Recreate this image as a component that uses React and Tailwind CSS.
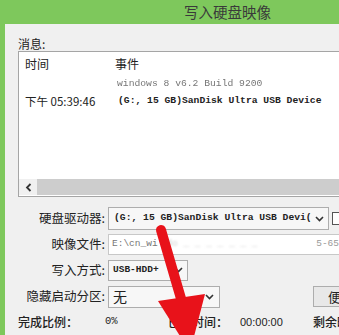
import React from 'react';

const cjk = { fontFamily: '"Noto Sans CJK SC", "Noto Sans", sans-serif' };
const mono = { fontFamily: '"Liberation Mono", "DejaVu Sans Mono", monospace' };

function Chevron() {
  return (
    <svg width="9" height="6" viewBox="0 0 9 6" className="shrink-0">
      <path d="M1 1 L4.5 4.5 L8 1" fill="none" stroke="#333" strokeWidth="1.6" />
    </svg>
  );
}

function Label({ children }) {
  return (
    <div className="w-[90px] shrink-0 pr-[3px] text-right text-[12.5px] text-[#222]" style={cjk}>
      {children}
    </div>
  );
}

export default function App() {
  return (
    <div className="relative w-[339px] h-[335px] overflow-hidden bg-[#7ec85c]">
      {/* title bar */}
      <div className="h-[24px] flex items-center pl-[184px] text-[14.5px] text-[#3a3a3a]" style={cjk}>
        写入硬盘映像
      </div>

      {/* body */}
      <div className="ml-[5px] h-[311px] bg-[#f0f0f0] pl-[13px] pt-[12px]">
        <div className="text-[12px] leading-[15px] text-[#222]" style={cjk}>消息:</div>

        {/* message list */}
        <div className="h-[146px] border border-[#a5a5a5] border-r-0 bg-white flex flex-col">
          <div className="flex h-[24px] items-center pl-[6px] text-[12px] text-[#222]" style={cjk}>
            <span className="w-[90px] shrink-0">时间</span>
            <span>事件</span>
          </div>
          <div className="pl-[98px] h-[17px] flex items-center text-[9.7px] text-[#777] blur-[0.4px] whitespace-nowrap" style={mono}>
            windows 8 v6.2 Build 9200
          </div>
          <div className="flex h-[17px] items-center pl-[6px] whitespace-nowrap">
            <span className="w-[93px] shrink-0 text-[11.5px] text-[#222]" style={cjk}>下午 05:39:46</span>
            <span className="text-[9.7px] text-[#222] font-semibold" style={mono}>(G:, 15 GB)SanDisk Ultra USB Device</span>
          </div>
          <div className="flex-1" />
          <div className="h-[16px] mb-[1px] flex bg-[#cdcdcd]">
            <div className="w-[18px] bg-[#f0f0f0] flex items-center justify-center">
              <svg width="7" height="9" viewBox="0 0 7 9">
                <path d="M5.5 1 L2 4.5 L5.5 8" fill="none" stroke="#333" strokeWidth="1.8" />
              </svg>
            </div>
          </div>
        </div>

        {/* form */}
        <div className="mt-[10px] flex flex-col gap-[3px]">
          <div className="flex items-center h-[23px]">
            <Label>硬盘驱动器:</Label>
            <div className="w-[221px] shrink-0 h-[23px] border border-[#adadad] bg-[#f7f7f7] flex items-center pl-[5px] pr-[4px] gap-[2px]">
              <span className="flex-1 overflow-hidden whitespace-nowrap text-[9.7px] text-[#222] font-semibold" style={mono}>
                (G:, 15 GB)SanDisk Ultra USB Devi(
              </span>
              <Chevron />
            </div>
            <div className="ml-[3px] w-[12px] h-[13px] border border-[#555] bg-white shrink-0" />
          </div>

          <div className="flex items-center h-[22px]">
            <Label>映像文件:</Label>
            <div className="flex-1 h-[21px] border border-[#c8c8c8] border-r-0 bg-white flex items-center pl-[3px] whitespace-nowrap overflow-hidden">
              <span className="text-[9.5px] text-[#777]" style={mono}>E:\cn_wi</span>
              <span className="ml-[3px] text-[9.5px] text-[#ccc] blur-[1.2px]" style={mono}>ndo _ _ _ _ _ _ _</span>
              <span className="ml-auto text-[9.5px] text-[#999]" style={mono}>5-65</span>
            </div>
          </div>

          <div className="flex items-center h-[24px]">
            <Label>写入方式:</Label>
            <div className="w-[80px] shrink-0 h-[21px] border border-[#adadad] bg-[#f7f7f7] flex items-center pl-[4px] pr-[4px]">
              <span className="flex-1 text-[9.5px] text-[#222] font-semibold whitespace-nowrap" style={mono}>USB-HDD+</span>
              <Chevron />
            </div>
          </div>

          <div className="flex items-center h-[23px]">
            <Label>隐藏启动分区:</Label>
            <div className="w-[112px] shrink-0 h-[22px] border border-[#adadad] bg-[#f7f7f7] flex items-center pl-[4px] pr-[5px]">
              <span className="flex-1 text-[14px] text-[#222]" style={cjk}>无</span>
              <Chevron />
            </div>
            <div className="ml-[93px] w-[40px] shrink-0 h-[21px] border border-[#adadad] bg-[#e8e8e8] flex items-center pl-[14px] text-[13px] text-[#222] whitespace-nowrap overflow-hidden" style={cjk}>
              便捷
            </div>
          </div>
        </div>

        {/* progress line */}
        <div className="mt-[5px] flex items-center h-[18px] text-[12px] text-[#222] whitespace-nowrap" style={cjk}>
          <span className="w-[87px] shrink-0 font-medium">完成比例：</span>
          <span className="w-[63px] shrink-0 text-[10.5px]" style={mono}>0%</span>
          <span className="w-[72px] shrink-0 font-medium">已用时间：</span>
          <span className="w-[73px] shrink-0 text-[11px]" style={{ fontFamily: '"Liberation Sans", sans-serif' }}>00:00:00</span>
          <span className="shrink-0 font-medium">剩余时间：</span>
        </div>
      </div>

      {/* red annotation arrow */}
      <svg className="absolute inset-0 pointer-events-none" width="339" height="335" viewBox="0 0 339 335">
        <line x1="161" y1="230" x2="182" y2="302" stroke="#e8121a" strokeWidth="10" strokeLinecap="round" />
        <polygon points="158,301 205,294 190,352" fill="#e8121a" />
      </svg>
    </div>
  );
}
